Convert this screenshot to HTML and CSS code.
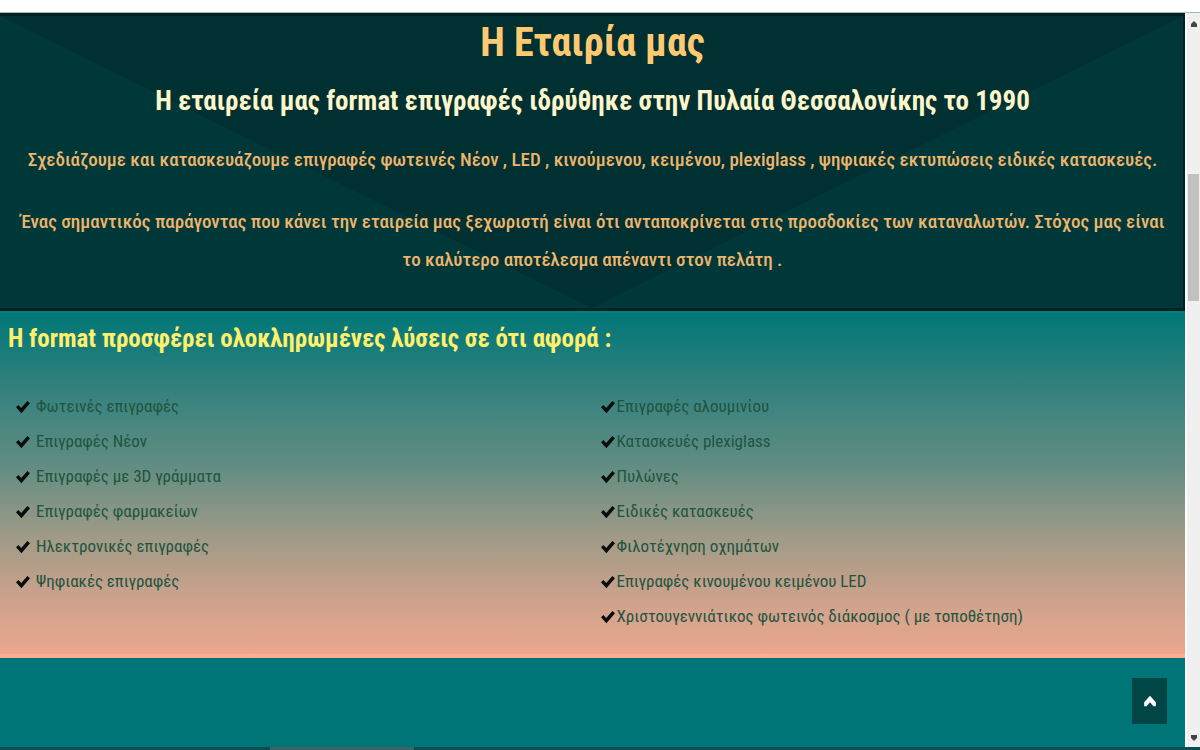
FILE: index.html
```html
<!DOCTYPE html>
<html lang="el">
<head>
<meta charset="utf-8">
<title>Η Εταιρία μας</title>
<link rel="stylesheet" href="styles.css">
</head>
<body>
<svg class="defs" aria-hidden="true">
  <symbol id="check" viewBox="0 0 14 14"><path d="M0 7.2 2.4 5 5.2 8 11.4 1 14 3.2 5.4 13.2Z"/></symbol>
</svg>
<div class="topbar"></div>
<div class="window">
  <main class="page">
    <section class="about">
      <h1>Η Εταιρία μας</h1>
      <h2>Η εταιρεία μας format επιγραφές ιδρύθηκε στην Πυλαία Θεσσαλονίκης το 1990</h2>
      <p>Σχεδιάζουμε και κατασκευάζουμε επιγραφές φωτεινές Νέον , LED , κινούμενου, κειμένου, plexiglass , ψηφιακές εκτυπώσεις ειδικές κατασκευές.</p>
      <p>Ένας σημαντικός παράγοντας που κάνει την εταιρεία μας ξεχωριστή είναι ότι ανταποκρίνεται στις προσδοκίες των καταναλωτών. Στόχος μας είναι<br>το καλύτερο αποτέλεσμα απέναντι στον πελάτη .</p>
    </section>
    <section class="services">
      <h3>Η format προσφέρει ολοκληρωμένες λύσεις σε ότι αφορά :</h3>
      <div class="columns">
        <ul class="list spaced">
          <li><svg class="check"><use href="#check"/></svg>Φωτεινές επιγραφές</li>
          <li><svg class="check"><use href="#check"/></svg>Επιγραφές Νέον</li>
          <li><svg class="check"><use href="#check"/></svg>Επιγραφές με 3D γράμματα</li>
          <li><svg class="check"><use href="#check"/></svg>Επιγραφές φαρμακείων</li>
          <li><svg class="check"><use href="#check"/></svg>Ηλεκτρονικές επιγραφές</li>
          <li><svg class="check"><use href="#check"/></svg>Ψηφιακές επιγραφές</li>
        </ul>
        <ul class="list">
          <li><svg class="check"><use href="#check"/></svg>Επιγραφές αλουμινίου</li>
          <li><svg class="check"><use href="#check"/></svg>Κατασκευές plexiglass</li>
          <li><svg class="check"><use href="#check"/></svg>Πυλώνες</li>
          <li><svg class="check"><use href="#check"/></svg>Ειδικές κατασκευές</li>
          <li><svg class="check"><use href="#check"/></svg>Φιλοτέχνηση οχημάτων</li>
          <li><svg class="check"><use href="#check"/></svg>Επιγραφές κινουμένου κειμένου LED</li>
          <li><svg class="check"><use href="#check"/></svg>Χριστουγεννιάτικος φωτεινός διάκοσμος ( με τοποθέτηση)</li>
        </ul>
      </div>
    </section>
    <section class="next">
      <button class="to-top" type="button" aria-label="Επιστροφή στην κορυφή">
        <svg viewBox="0 0 12 12"><path d="M1 10.500V7L6 1.500 11 7v3.500L9 10.500 6 7 3 10.500Z"/></svg>
      </button>
    </section>
  </main>
  <div class="scrollbar" aria-hidden="true">
    <svg class="arrow" viewBox="0 0 6 6"><path d="M3 0 6 3V6H0V3Z"/></svg>
    <div class="track"><div class="thumb"></div></div>
    <svg class="arrow" viewBox="0 0 6 6"><path d="M0 0H6V3L3 6 0 3Z"/></svg>
  </div>
</div>
<div class="bottombar"><div class="tab"></div></div>
</body>
</html>
```
FILE: styles.css
```css
* { box-sizing: border-box; }
body {
  margin: 0;
  min-height: 100vh;
  display: flex;
  flex-direction: column;
  background: #fff;
  font-family: "Roboto Condensed", Roboto, "Noto Sans", sans-serif;
}
h1, h2, h3, p, ul { margin: 0; padding: 0; }
.defs { position: absolute; width: 0; height: 0; }
.topbar { height: 13px; border-bottom: 1px solid #a9b8b8; }
.window { flex: 1; display: flex; }
.page { flex: 1; display: flex; flex-direction: column; }
.about {
  position: relative;
  isolation: isolate;
  padding: 3px 8px 29px 10px;
  text-align: center;
  color: #eeb56c;
  border: solid #002122;
  border-width: 3px 2px 3px 0;
  background: #003839;
}
.about::before {
  content: "";
  position: absolute;
  inset: 0;
  z-index: -1;
  background: #003031;
  clip-path: polygon(0 0, 100% 0, 50% 100%);
}
.about h1 { font-size: 40px; line-height: 48px; color: #ffc972; }
.about h2 { font-size: 27px; line-height: 40px; margin: 14px 0 20px; color: #fff5cb; }
.about p { font-size: 19px; line-height: 38px; font-weight: 500; }
.about p + p { margin-top: 24px; }
.services {
  padding: 8px 8px 20px;
  color: #1d5540;
  background: linear-gradient(#007777, #2f807d 20%, #628d82 45%, #9d9a87 65%, #cda28c 84%, #eaa78e);
  border-top: 2px solid #007f80;
  border-bottom: 4px solid #ffac91;
}
.services h3 { font-size: 25px; line-height: 36px; color: #fff06c; }
.columns { display: grid; grid-template-columns: 1fr 1fr; margin-top: 32px; }
.list { list-style: none; font-size: 17px; line-height: 35px; padding-left: 8px; }
.list li { display: flex; align-items: center; gap: 2px; }
.spaced li { gap: 6px; }
.check { width: 14px; height: 14px; fill: #080c0b; flex: none; }
.next {
  flex: 1;
  display: flex;
  justify-content: flex-end;
  align-items: flex-start;
  padding: 20px 18px;
  background: #007577;
}
.to-top {
  width: 35px;
  height: 46px;
  padding: 0;
  border: 0;
  display: grid;
  place-items: center;
  background: #004646;
}
.to-top svg { width: 14px; height: 14px; fill: #fff; }
.scrollbar {
  width: 15px;
  display: flex;
  flex-direction: column;
  align-items: center;
  padding: 8px 0 6px;
  background: #f0f0f0;
  border-left: 2px solid #fff;
}
.arrow { width: 6px; height: 6px; fill: #444; }
.track { flex: 1; align-self: stretch; padding: 0 1px; }
.thumb { height: 18%; margin-top: 147px; background: #c1c1c1; }
.bottombar { height: 3px; background: #084e54; }
.tab { width: 12%; height: 3px; margin-left: 22.5%; background: #3b6468; }
```
